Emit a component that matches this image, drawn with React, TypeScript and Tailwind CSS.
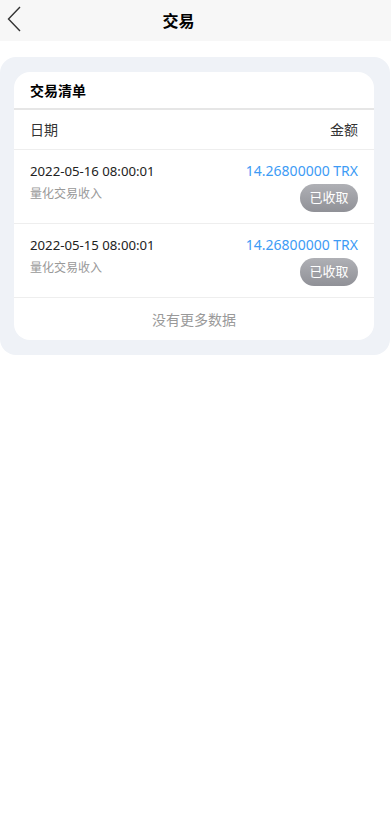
import React from "react";

const rows = [
  { date: "2022-05-16 08:00:01", amount: "14.26800000 TRX" },
  { date: "2022-05-15 08:00:01", amount: "14.26800000 TRX" },
];

export default function App() {
  return (
    <div
      className="min-h-[828px] bg-white"
      style={{ fontFamily: '"Noto Sans", "Noto Sans CJK SC", sans-serif' }}
    >
      <div className="relative flex h-[41px] items-center justify-center bg-[#f7f7f7] pr-[34px]">
        <svg
          className="absolute left-[7px] top-[6px]"
          width="14"
          height="26"
          viewBox="0 0 14 26"
          fill="none"
        >
          <path d="M13 1L1.5 13L13 25" stroke="#333" strokeWidth="1.4" />
        </svg>
        <span className="text-[16px] font-bold text-black">交易</span>
      </div>
      <div className="pt-[16px]">
        <div className="mr-[1px] rounded-[16px] bg-[#eff2f7] pb-[15px] pl-[14px] pr-[16px] pt-[15px]">
          <div className="overflow-hidden rounded-[16px] bg-white">
            <div className="flex h-[38px] items-center border-b-2 border-[#e6e6e6] px-[16px] pt-[1px] text-[14px] font-bold text-black">
              交易清单
            </div>
            <div className="flex h-[40px] items-center justify-between border-b border-[#eeeeee] px-[16px] text-[14px] text-[#333]">
              <span>日期</span>
              <span>金额</span>
            </div>
            {rows.map((r, i) => (
              <div
                key={i}
                className="flex h-[74px] justify-between border-b border-[#eeeeee] px-[16px] pt-[10px]"
              >
                <div className="flex flex-col">
                  <span className="text-[13.2px] leading-[22px] text-[#222]">{r.date}</span>
                  <span className="mt-[2px] text-[12px] leading-[20px] text-[#999]">量化交易收入</span>
                </div>
                <div className="flex flex-col items-end">
                  <span className="text-[14px] leading-[22px] text-[#3d9bf5]">{r.amount}</span>
                  <span className="mt-[2px] flex h-[28px] w-[58px] items-center justify-center rounded-full bg-gradient-to-b from-[#afb0b5] to-[#909197] text-[13px] text-white">
                    已收取
                  </span>
                </div>
              </div>
            ))}
            <div className="flex h-[42px] items-center justify-center text-[14px] text-[#999]">
              没有更多数据
            </div>
          </div>
        </div>
      </div>
    </div>
  );
}
